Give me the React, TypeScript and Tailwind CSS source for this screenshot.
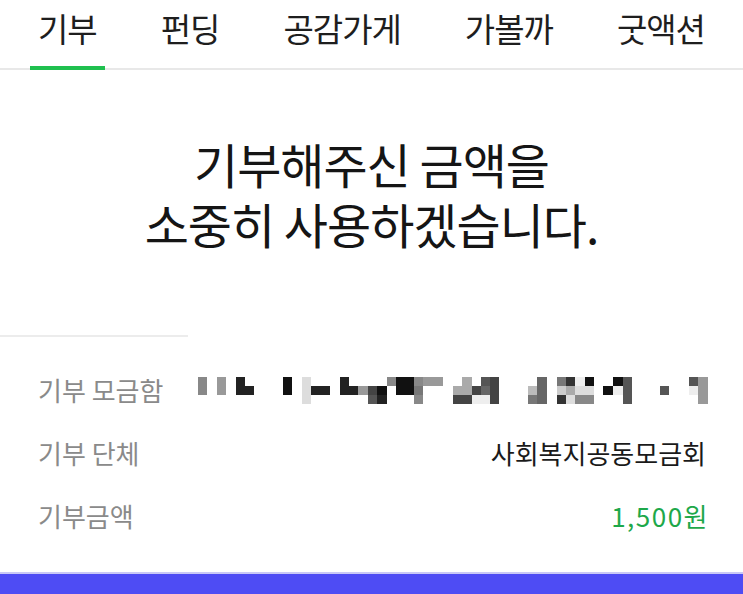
import React from 'react';

const tabs = ['기부', '펀딩', '공감가게', '가볼까', '굿액션'];

// censored text: [x, w, row, colour], rows are 9px tall
const mosaic: [number, number, number, string][] = [
  [8, 9, 0, '#888'], [8, 9, 1, '#888'],
  [27, 9, 0, '#999'], [27, 9, 1, '#999'],
  [46, 9, 0, '#222'], [46, 9, 1, '#222'], [55, 9, 1, '#222'],
  [93, 9, 0, '#111'], [93, 9, 1, '#111'],
  [112, 9, 0, '#ddd'], [112, 9, 1, '#ddd'], [112, 9, 2, '#ddd'],
  [121, 19, 1, '#222'],
  [150, 9, 0, '#222'], [150, 9, 1, '#222'], [159, 9, 1, '#222'],
  [168, 10, 1, '#999'],
  [178, 9, 1, '#444'], [178, 9, 2, '#555'],
  [187, 10, 1, '#111'], [187, 10, 2, '#222'],
  [197, 9, 0, '#888'],
  [206, 18, 0, '#111'], [206, 18, 1, '#111'],
  [224, 9, 0, '#888'], [224, 9, 1, '#777'], [224, 9, 2, '#888'],
  [233, 20, 0, '#999'],
  [263, 9, 1, '#aaa'], [263, 9, 2, '#444'],
  [272, 10, 0, '#aaa'], [272, 10, 1, '#aaa'], [272, 10, 2, '#444'],
  [282, 9, 1, '#444'], [282, 9, 2, '#eee'],
  [291, 9, 0, '#555'], [291, 9, 1, '#666'], [291, 9, 2, '#eee'],
  [300, 9, 0, '#444'], [300, 9, 1, '#444'], [300, 9, 2, '#444'],
  [338, 9, 1, '#bbb'], [338, 9, 2, '#777'],
  [347, 10, 0, '#666'], [347, 10, 1, '#666'], [347, 10, 2, '#666'],
  [367, 9, 0, '#777'], [367, 9, 1, '#ccc'], [367, 9, 2, '#333'],
  [376, 9, 0, '#333'], [376, 9, 1, '#aaa'], [376, 9, 2, '#ddd'],
  [385, 10, 0, '#eee'], [385, 10, 1, '#ddd'], [385, 10, 2, '#888'],
  [395, 9, 0, '#111'], [395, 9, 1, '#ddd'], [395, 9, 2, '#888'],
  [413, 10, 1, '#111'],
  [423, 10, 0, '#111'], [423, 10, 1, '#eee'],
  [433, 9, 0, '#555'], [433, 9, 1, '#555'], [433, 9, 2, '#555'],
  [470, 9, 1, '#555'],
  [499, 9, 0, '#555'], [499, 9, 1, '#eee'],
  [508, 10, 0, '#999'], [508, 10, 1, '#999'], [508, 10, 2, '#999'],
];

const Mosaic = () => (
  <svg width="520" height="30" viewBox="0 0 520 30" className="-mr-[4px] shrink-0">
    {mosaic.map(([x, w, row, c], i) => (
      <rect key={i} x={x} y={2 + row * 9} width={w} height={9} fill={c} />
    ))}
  </svg>
);

export default function App() {
  return (
    <div
      className="w-[743px] h-[594px] bg-white flex flex-col overflow-hidden"
      style={{ fontFamily: '"Noto Sans CJK KR", "Noto Sans", sans-serif' }}
    >
      {/* Tabs */}
      <div className="h-[70px] border-b-2 border-[#e8e8e8] flex justify-between pl-[30px] pr-[30px] shrink-0">
        {tabs.map((t, i) => (
          <div
            key={t}
            className={
              'h-[70px] -mb-[2px] px-2 pt-[8px] text-[33px] leading-[40px] text-[#1e1e1e] tracking-[-1px] ' +
              (i === 0 ? 'border-b-4 border-[#1fc04f]' : '')
            }
          >
            {t}
          </div>
        ))}
      </div>

      {/* Message */}
      <div className="pt-[63px] text-center text-[48px] leading-[60px] text-[#151515] tracking-[-1px]">
        <p>기부해주신 금액을</p>
        <p>소중히 사용하겠습니다.</p>
      </div>

      <div className="mt-[82px] w-[188px] h-[2px] bg-[#ececec]" />

      {/* Details */}
      <div className="mt-[21px] flex flex-col">
        <div className="h-[63px] flex items-center justify-between pl-[38px] pr-[37px]">
          <span className="text-[26px] text-[#8a8a8a]">기부 모금함</span>
          <Mosaic />
        </div>
        <div className="h-[63px] flex items-center justify-between pl-[38px] pr-[37px]">
          <span className="text-[26px] text-[#8a8a8a]">기부 단체</span>
          <span className="text-[26px] text-[#1a1a1a]">사회복지공동모금회</span>
        </div>
        <div className="h-[63px] flex items-center justify-between pl-[38px] pr-[37px]">
          <span className="text-[26px] text-[#8a8a8a]">기부금액</span>
          <span className="text-[26px] text-[#1ea84a] tracking-[1.5px] -mr-[3px]">1,500원</span>
        </div>
      </div>

      <div className="mt-auto h-[22px] bg-[#4e4cf4] border-t-2 border-[#c9c8f6] shrink-0" />
    </div>
  );
}
